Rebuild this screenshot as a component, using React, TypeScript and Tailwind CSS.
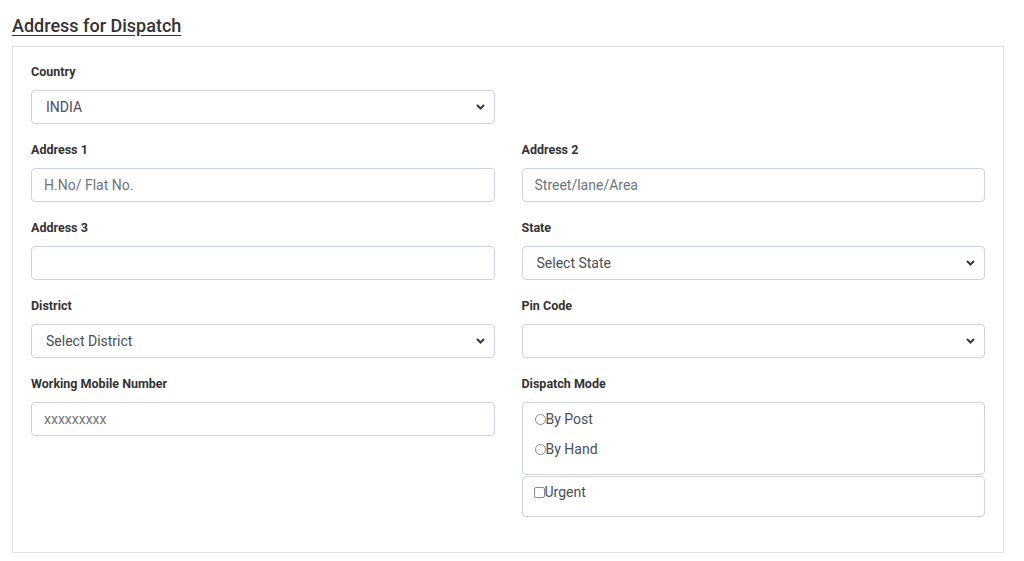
import React from "react";

const FONT = { fontFamily: "Roboto, 'Liberation Sans', sans-serif" };

function Chevron() {
  return (
    <svg className="pointer-events-none absolute right-[10px] top-1/2 -translate-y-1/2" width="9" height="6" viewBox="0 0 9 6">
      <path d="M1 1l3.5 3.5L8 1" fill="none" stroke="#343a40" strokeWidth="2" />
    </svg>
  );
}

function Label({ children }: { children: React.ReactNode }) {
  return <label className="block text-[12.5px] leading-[18px] font-bold text-[#333] mb-[9px]">{children}</label>;
}

function TextField({ label, placeholder }: { label: string; placeholder?: string }) {
  return (
    <div className="mb-[17px]">
      <Label>{label}</Label>
      <input
        placeholder={placeholder}
        className="block w-full h-[34px] px-[12px] text-[14px] text-[#495057] placeholder:text-[#6c757d] bg-white border border-[#ced4da] rounded-[4px] outline-none"
        style={FONT}
      />
    </div>
  );
}

function SelectField({ label, value }: { label: string; value: string }) {
  return (
    <div className="mb-[17px]">
      <Label>{label}</Label>
      <div className="relative">
        <select
          defaultValue={value}
          className="block w-full h-[34px] pl-[14px] pr-8 text-[14px] text-[#495057] bg-white border border-[#ced4da] rounded-[4px] appearance-none outline-none"
          style={FONT}
        >
          <option value={value}>{value}</option>
        </select>
        <Chevron />
      </div>
    </div>
  );
}

function Radio({ label }: { label: string }) {
  return (
    <div className="flex items-center text-[14px] leading-[21px] text-[#495057]">
      <span className="inline-block w-[11px] h-[11px] rounded-full border border-[#8a8a8a]" />
      {label}
    </div>
  );
}

export default function App() {
  return (
    <div className="bg-white min-h-[561px] pt-3" style={FONT}>
      <h2 className="ml-3 text-[18px] leading-[27px] font-medium text-[#333] underline underline-offset-[3px] mb-[7px]">
        Address for Dispatch
      </h2>
      <div className="ml-3 w-[992px] border border-[#e2e2e2] px-[18px] pt-[16px] pb-[18px]">
        <div className="grid grid-cols-2 gap-x-[27px]">
          <SelectField label="Country" value="INDIA" />
          <div />
          <TextField label="Address 1" placeholder="H.No/ Flat No." />
          <TextField label="Address 2" placeholder="Street/lane/Area" />
          <TextField label="Address 3" />
          <SelectField label="State" value="Select State" />
          <SelectField label="District" value="Select District" />
          <SelectField label="Pin Code" value="" />
          <TextField label="Working Mobile Number" placeholder="xxxxxxxxx" />
          <div className="mb-[17px]">
            <Label>Dispatch Mode</Label>
            <div className="border border-[#ced4da] rounded-[4px] pl-[12px] pt-[6px] pb-[14px] flex flex-col gap-[9px]">
              <Radio label="By Post" />
              <Radio label="By Hand" />
            </div>
            <div className="mt-[1px] border border-[#ced4da] rounded-[4px] pl-[11px] pt-[5px] pb-[13px]">
              <div className="flex items-center text-[14px] leading-[21px] text-[#495057]">
                <span className="inline-block w-[11px] h-[11px] rounded-[2px] border border-[#8a8a8a]" />
                Urgent
              </div>
            </div>
          </div>
        </div>
      </div>
    </div>
  );
}
